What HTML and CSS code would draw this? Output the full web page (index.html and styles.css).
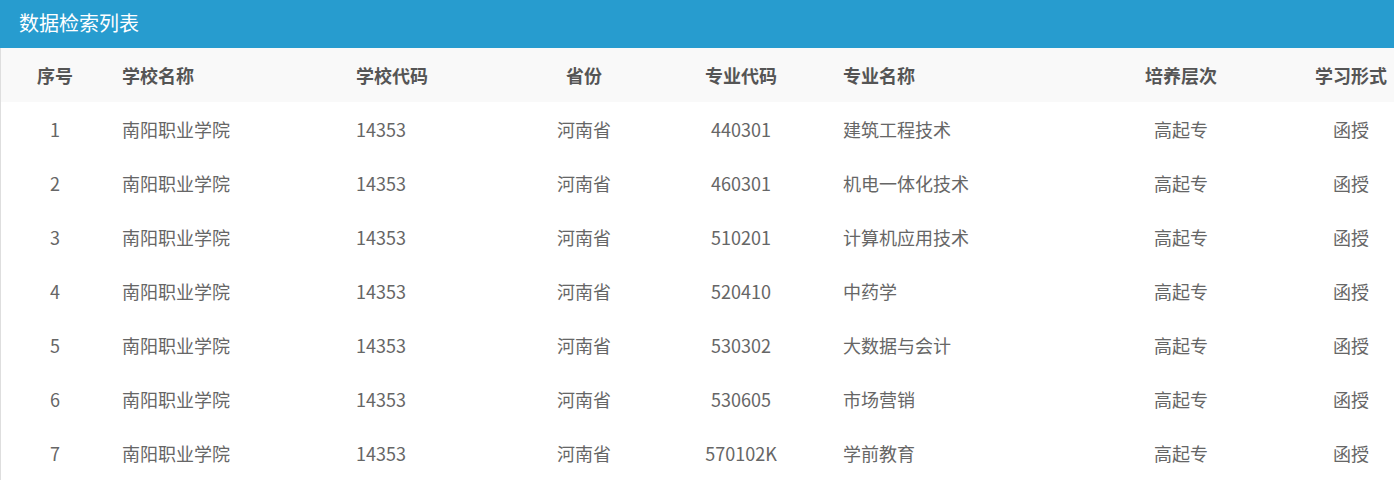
FILE: index.html
```html
<!DOCTYPE html>
<html lang="zh-CN">
<head>
<meta charset="utf-8">
<title>数据检索列表</title>
<link rel="stylesheet" href="styles.css">
</head>
<body>
<div class="panel">
  <div class="panel-title">数据检索列表</div>
  <div class="panel-body">
    <div class="row head">
      <div class="c c1">序号</div>
      <div class="c c2">学校名称</div>
      <div class="c c3">学校代码</div>
      <div class="c c4">省份</div>
      <div class="c c5">专业代码</div>
      <div class="c c6">专业名称</div>
      <div class="c c7">培养层次</div>
      <div class="c c8">学习形式</div>
    </div>
    <div class="row">
      <div class="c c1">1</div><div class="c c2">南阳职业学院</div><div class="c c3">14353</div><div class="c c4">河南省</div><div class="c c5">440301</div><div class="c c6">建筑工程技术</div><div class="c c7">高起专</div><div class="c c8">函授</div>
    </div>
    <div class="row">
      <div class="c c1">2</div><div class="c c2">南阳职业学院</div><div class="c c3">14353</div><div class="c c4">河南省</div><div class="c c5">460301</div><div class="c c6">机电一体化技术</div><div class="c c7">高起专</div><div class="c c8">函授</div>
    </div>
    <div class="row">
      <div class="c c1">3</div><div class="c c2">南阳职业学院</div><div class="c c3">14353</div><div class="c c4">河南省</div><div class="c c5">510201</div><div class="c c6">计算机应用技术</div><div class="c c7">高起专</div><div class="c c8">函授</div>
    </div>
    <div class="row">
      <div class="c c1">4</div><div class="c c2">南阳职业学院</div><div class="c c3">14353</div><div class="c c4">河南省</div><div class="c c5">520410</div><div class="c c6">中药学</div><div class="c c7">高起专</div><div class="c c8">函授</div>
    </div>
    <div class="row">
      <div class="c c1">5</div><div class="c c2">南阳职业学院</div><div class="c c3">14353</div><div class="c c4">河南省</div><div class="c c5">530302</div><div class="c c6">大数据与会计</div><div class="c c7">高起专</div><div class="c c8">函授</div>
    </div>
    <div class="row">
      <div class="c c1">6</div><div class="c c2">南阳职业学院</div><div class="c c3">14353</div><div class="c c4">河南省</div><div class="c c5">530605</div><div class="c c6">市场营销</div><div class="c c7">高起专</div><div class="c c8">函授</div>
    </div>
    <div class="row">
      <div class="c c1">7</div><div class="c c2">南阳职业学院</div><div class="c c3">14353</div><div class="c c4">河南省</div><div class="c c5">570102K</div><div class="c c6">学前教育</div><div class="c c7">高起专</div><div class="c c8">函授</div>
    </div>
  </div>
</div>
</body>
</html>
```

FILE: styles.css
```css
html, body {
  margin: 0;
  padding: 0;
  background: #fff;
}
body {
  font-family: "Noto Sans CJK SC", "Noto Sans", sans-serif;
  color: #666;
  overflow: hidden;
}
.panel {
  width: 1394px;
}
.panel-title {
  height: 48px;
  background: #279ccf;
  color: #fff;
  font-size: 20px;
  line-height: 46px;
  padding-left: 19px;
  box-sizing: border-box;
}
.panel-body {
  border-left: 1px solid #dedede;
}
.row {
  display: grid;
  grid-template-columns: 108px 234px 177px 128px 186px 220px 254px 86px;
  height: 54px;
  align-items: center;
  font-size: 18px;
}
.row.head {
  background: #f9f9f9;
  font-weight: bold;
  color: #555;
}
.c {
  white-space: nowrap;
}
.c1, .c4, .c5, .c7, .c8 {
  text-align: center;
}
.c2, .c3 {
  padding-left: 13px;
}
.c6 {
  padding-left: 9px;
}
```
